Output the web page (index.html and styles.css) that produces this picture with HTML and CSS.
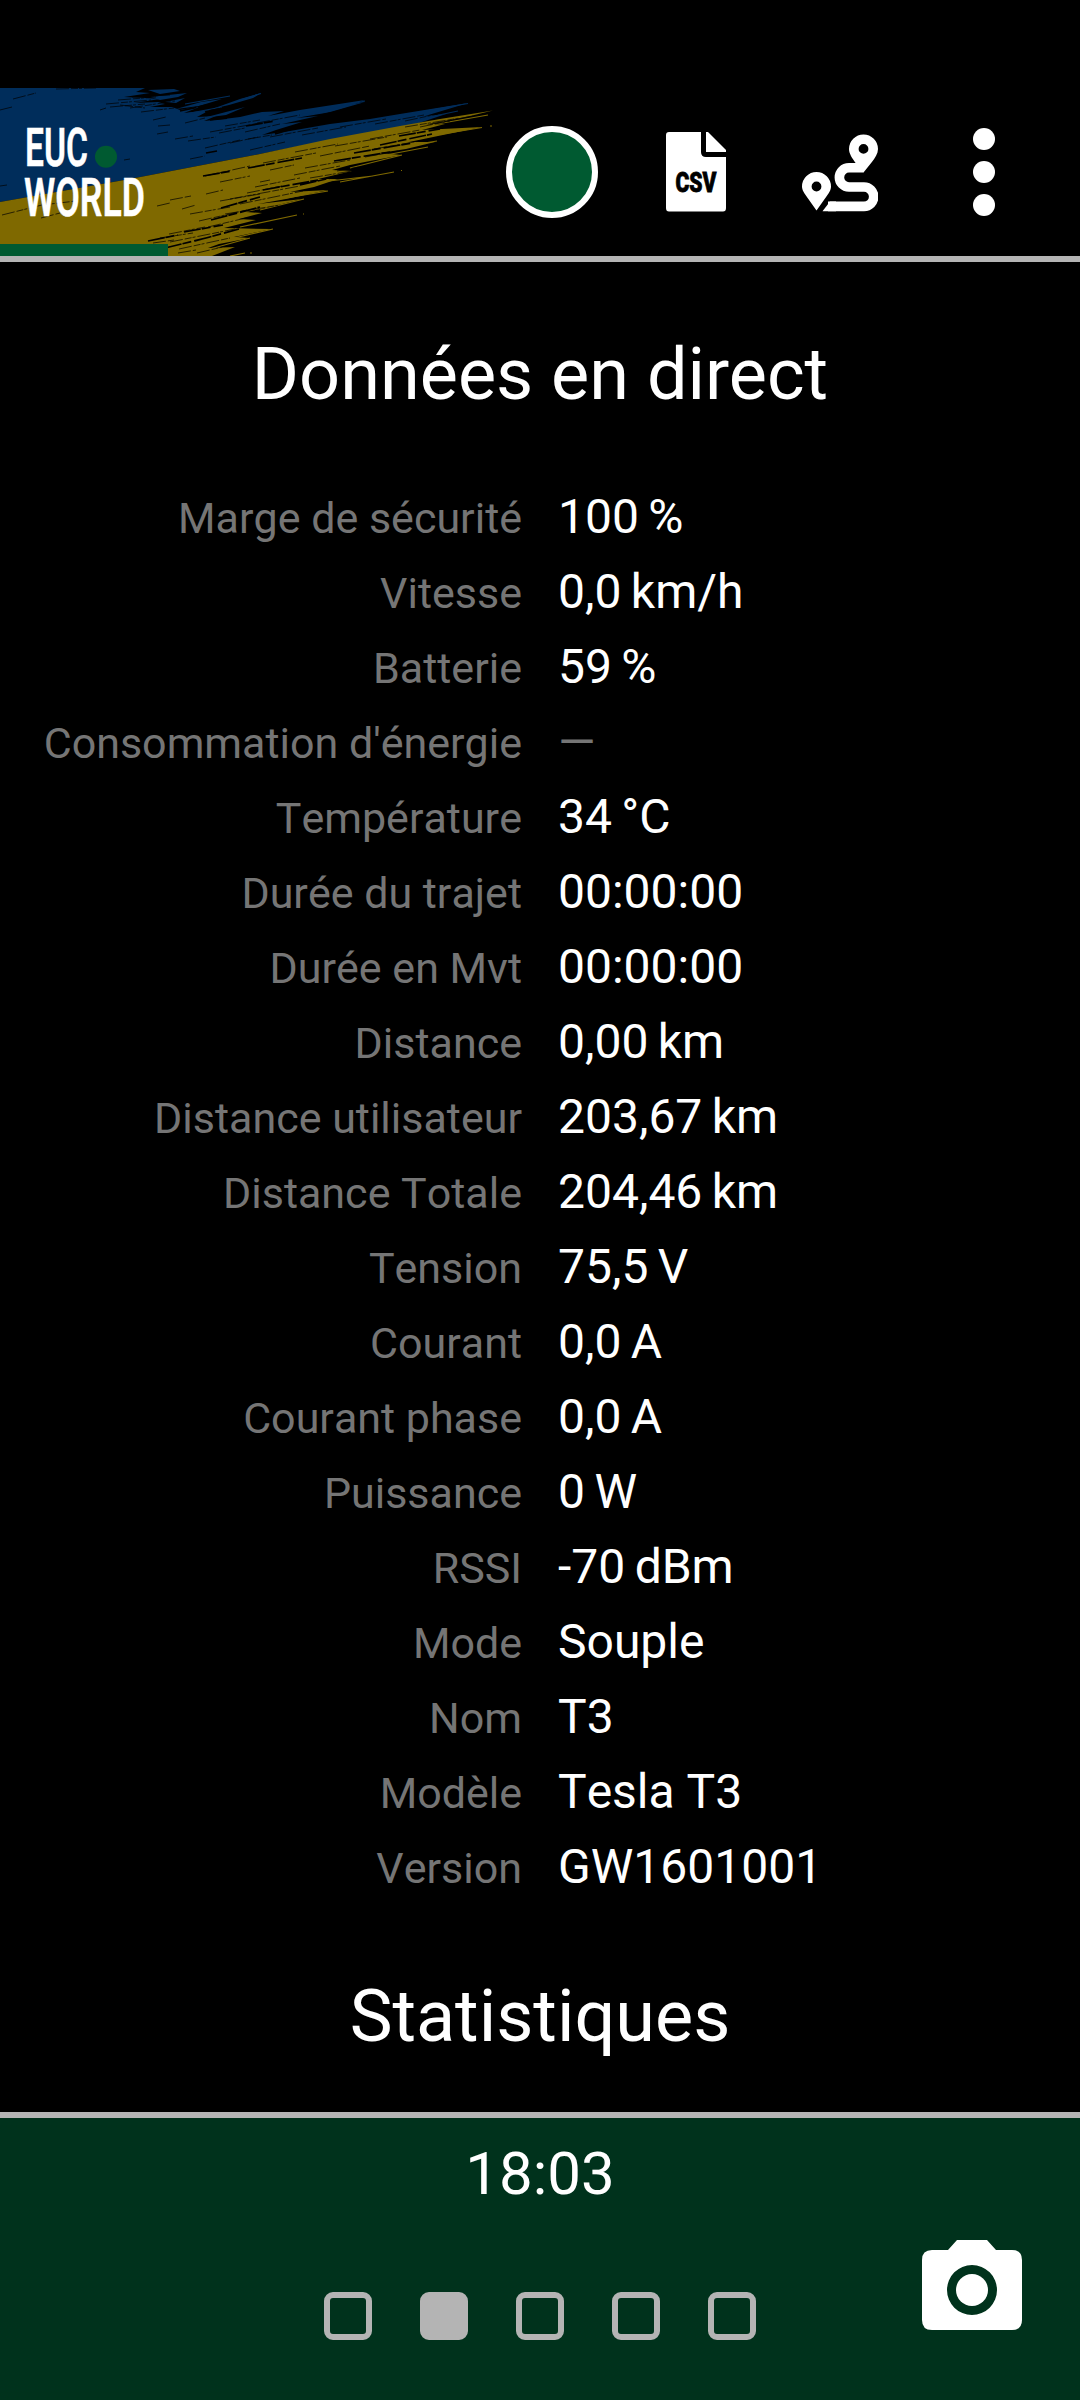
FILE: index.html
```html
<!DOCTYPE html>
<html lang="fr">
<head>
  <meta charset="UTF-8" />
  <meta name="viewport" content="width=device-width, initial-scale=1.0"/>
  <title>EUC World</title>
  <link rel="stylesheet" href="styles.css">
</head>
<body>

  <header>
    <div class="brand">
      <svg class="flag" width="510" height="168" viewBox="0 0 510 168">
        <!-- blue half -->
        <g class="blue">
          <path d="M0 0H145L136 4L150 5L124 9L146 10L160 11L134 15L158 14L165 16L150 19L172 19L180 22L202 18L184 25L210 22L197 29L216 28L204 33L224 31L240 29L262 24L284 23L268 28L300 22L365 12L346 19L325 25L296 30L318 28L282 36L302 34L276 42L262 47L290 43L330 36L370 31L400 26L468 15L445 22L425 28L446 26L416 36L384 43L330 52L260 66L130 91L0 114Z"/>
          <path d="M148 2L174 1L180 3L160 6ZM150 9L187 5L178 9L160 12ZM165 14L185 10L176 15ZM212 21L240 11L261 5L253 10L229 17ZM176 21L201 14L222 11L199 18ZM203 30L245 19L226 27ZM280 31L330 20L365 14L330 24Z"/>
        </g>
        <!-- yellow half -->
        <g class="yellow">
          <path d="M0 114L130 91L260 66L330 51L400 38L440 31L493 22.500L470 28L446 33L426 37L445 36L422 42L482 39L438 48L409 54L435 54L406 61L380 65L402 67L370 73L350 77L332 82L352 83L318 91L338 91L314 99L290 104L328 102L286 111L258 116L302 111L270 119L246 124L262 125L239 131L256 132L224 140L272 141L234 149L250 150L219 156L208 160L235 159L212 168H0Z"/>
        </g>
        <g class="yellow-line">
          <path d="M400 53L482 39.500M392 44L488 27M370 70L428 59M340 94L394 84M320 94L373 88M280 111L328 103M260 122L304 111M240 139L297 127M230 151L273 141M210 161L250 150M230 168L245 165M401 82.500L402 82.500M303 126L304 126M490 38L492 38M250 165L252 165M350 80L402 67M380 62L437 53"/>
        </g>
        <g class="blue-line">
          <path d="M380 31L468 15.500M310 26L365 13M240 12L261 5.500M185 16L230 8M420 31L458 23M180 27L222 19"/>
        </g>
        <!-- dry brush gaps -->
        <g class="gap">
          <path d="M118 12L156 9M132 9L170 7M106 16L151 12M110 19L145 16M130 20L175 13M141 24L174 20M100 22L106 20M120 17L145 20M153 32L166 29M185 35L205 30M157 46L168 44M158 38L170 37M175 51L193 48M205 60L240 52M188 53L216 49M219 45L245 40M230 55L258 49M225 38L260 32M245 44L280 36M248 51L272 47M250 62L285 54M257 35L300 27M289 41L336 31M270 49L318 40M302 47L346 39M340 39L386 31M375 36L424 27M405 33L438 26M13 11L36 5M0 22L12 19M56 1L96 0M124 72L130 71M0 98L7 97M190 71L205 68M210 44L260 35"/>
          <path class="thick" d="M206 65L217 63M246 38L275 33M210 32L228 30M180 23L225 13M205 24L240 16M275 46L306 37M248 80L302 70M203 88L232 83M148 153L178 147M165 160L210 149M184 144L223 137M195 153L239 141M211 132L260 119M221 120L260 109M263 102L318 92M300 97L348 86M334 73L390 64M354 65L412 55M380 57L432 46M399 48L440 41"/>
          <path d="M2 127L42 117L76 113M41 130L60 125M157 118L170 115M182 121L196 117M170 112L191 108M206 106L223 102M220 94L250 88M205 88L250 78M263 75L316 65M295 64L338 56M320 68L370 58M335 58L387 49M370 51L420 42M405 39L460 30M255 99L300 90M247 105L282 98M294 87L340 78M305 80L350 72M310 90L370 80M190 126L230 119M199 133L247 122M220 113L260 106M230 111L300 98M240 116L303 103M208 139L250 129M225 126L280 117M169 146L205 139M160 150L193 145M153 155L174 152M170 154L235 141M179 161L230 150M197 165L240 155M178 165L196 162M270 82L294 77M260 94L270 92M337 83L370 77M365 69L398 63M374 61L420 53M420 39L450 33M430 36L473 28"/>
        </g>
        <circle class="dot" cx="106" cy="68.700" r="11"/>
        <text class="logo-text" x="25" y="78" textLength="63" lengthAdjust="spacingAndGlyphs">EUC</text>
        <text class="logo-text" x="24" y="128" textLength="121" lengthAdjust="spacingAndGlyphs">WORLD</text>
        <rect class="charge" x="0" y="156" width="168" height="12"/>
      </svg>
    </div>

    <div class="action"><span class="record"></span></div>

    <div class="action">
      <svg width="60" height="80" viewBox="0 0 60 80">
        <path d="M3 0H35V20Q35 25 40 25H60V76Q60 79.500 57 79.500H3Q0 79.500 0 76V3Q0 0 3 0Z"/>
        <path d="M40 0H42L60 18V20H40Z"/>
        <text class="csv-text" x="9.500" y="59.500" textLength="41" lengthAdjust="spacingAndGlyphs">CSV</text>
      </svg>
    </div>

    <div class="action">
      <svg width="76" height="80" viewBox="0 0 76 80">
        <path fill-rule="evenodd" d="M61.500 40.500L54 31.500C50 26 47 21.500 47 17A14.500 14.500 0 0 1 76 17C76 21.500 73 26 69.500 30.500ZM61.500 12A4.900 4.900 0 1 0 61.500 21.800A4.900 4.900 0 1 0 61.500 12Z"/>
        <path fill-rule="evenodd" d="M14.500 78.500L6 66.500C2 61 0 58 0 54.500A14.500 14.500 0 0 1 29 54.500C29 58 27 61 23 66.500ZM14.500 49.600A4.900 4.900 0 1 0 14.500 59.400A4.900 4.900 0 1 0 14.500 49.600Z"/>
        <path class="road" d="M61.500 35.800H47A9.600 9.600 0 0 0 47 55H62A9.700 9.700 0 0 1 62 74.400H26"/>
        <path d="M20.500 79.200L28 69.600H34V79.200Z"/>
      </svg>
    </div>

    <div class="action menu"><span></span><span></span><span></span></div>
  </header>

  <main>
    <h1>Données en direct</h1>
    <dl>
      <dt>Marge de sécurité</dt><dd>100 %</dd>
      <dt>Vitesse</dt><dd>0,0 km/h</dd>
      <dt>Batterie</dt><dd>59 %</dd>
      <dt>Consommation d'énergie</dt><dd class="empty">—</dd>
      <dt>Température</dt><dd>34 °C</dd>
      <dt>Durée du trajet</dt><dd>00:00:00</dd>
      <dt>Durée en Mvt</dt><dd>00:00:00</dd>
      <dt>Distance</dt><dd>0,00 km</dd>
      <dt>Distance utilisateur</dt><dd>203,67 km</dd>
      <dt>Distance Totale</dt><dd>204,46 km</dd>
      <dt>Tension</dt><dd>75,5 V</dd>
      <dt>Courant</dt><dd>0,0 A</dd>
      <dt>Courant phase</dt><dd>0,0 A</dd>
      <dt>Puissance</dt><dd>0 W</dd>
      <dt>RSSI</dt><dd>-70 dBm</dd>
      <dt>Mode</dt><dd>Souple</dd>
      <dt>Nom</dt><dd>T3</dd>
      <dt>Modèle</dt><dd class="name">Tesla T3</dd>
      <dt>Version</dt><dd>GW1601001</dd>
    </dl>
    <h1>Statistiques</h1>
  </main>

  <footer>
    <div class="clock">18:03</div>
    <div class="pages">
      <span></span>
      <span class="active"></span>
      <span></span>
      <span></span>
      <span></span>
    </div>
    <svg class="camera" width="100" height="90" viewBox="0 0 100 90">
      <path fill-rule="evenodd" d="M35 0H65L74 10H90Q100 10 100 20V80Q100 90 90 90H10Q0 90 0 80V20Q0 10 10 10H26ZM50 25A25 25 0 1 0 50 75A25 25 0 1 0 50 25Z"/>
      <circle cx="50" cy="50" r="16"/>
    </svg>
  </footer>

</body>
</html>
```
FILE: styles.css
```css
* {
  box-sizing: border-box;
}
body {
  margin: 0;
  height: 2400px;
  display: flex;
  flex-direction: column;
  overflow: hidden;
  background-color: #000;
  color: #fff;
  font-family: Roboto, sans-serif;
}
svg {
  display: block;
  fill: #fff;
}
header {
  display: flex;
  height: 262px;
  padding-top: 88px;
  border-bottom: 6px solid #b4b4b4;
}
.brand {
  width: 480px;
}
.flag {
  overflow: hidden;
}
.blue {
  fill: #002d5b;
}
.yellow {
  fill: #7f6900;
}
.yellow-line, .blue-line, .gap {
  fill: none;
  stroke-width: 1.2;
}
.yellow-line {
  stroke: #7f6900;
}
.blue-line {
  stroke: #002d5b;
}
.gap {
  stroke: #000;
  stroke-width: 0.7;
  stroke-dasharray: 13 2 7 1 3 2;
}
.thick {
  stroke-width: 1.7;
  stroke-dasharray: 17 1 9 3;
}
.dot, .charge {
  fill: #005a31;
}
.logo-text {
  font-size: 54px;
  font-weight: 600;
  stroke: #fff;
  stroke-width: 0.4;
}
.action {
  width: 144px;
  display: flex;
  align-items: center;
  justify-content: center;
}
.record {
  width: 92px;
  height: 92px;
  border: 6px solid #fff;
  border-radius: 50%;
  background-color: #005a31;
}
.csv-text {
  fill: #000;
  stroke: #000;
  stroke-width: 0.8;
  font-size: 28px;
  font-weight: 900;
}
.road {
  fill: none;
  stroke: #fff;
  stroke-width: 9.6;
}
.menu {
  flex-direction: column;
  gap: 11px;
}
.menu span {
  width: 22px;
  height: 22px;
  border-radius: 50%;
  background-color: #fff;
}
main {
  flex: 1;
  overflow: hidden;
  padding-top: 65px;
}
h1 {
  margin: 0;
  font-size: 72px;
  font-weight: 400;
  line-height: 96px;
  text-align: center;
}
dl {
  display: grid;
  grid-template-columns: 522px 1fr;
  column-gap: 36px;
  grid-auto-rows: 75px;
  align-items: baseline;
  margin: 56px 0 65px;
  line-height: 75px;
  font-kerning: none;
}
dt {
  color: #757575;
  font-size: 43px;
  text-align: right;
}
dd {
  margin: 0;
  font-size: 48px;
  word-spacing: -2.5px;
}
.name {
  word-spacing: 0;
}
.empty {
  color: #757575;
}
footer {
  position: relative;
  height: 288px;
  border-top: 6px solid #b4b4b4;
  background-color: #00321c;
}
.clock {
  padding-top: 20px;
  font-size: 60px;
  line-height: 72px;
  text-align: center;
}
.pages {
  display: flex;
  justify-content: center;
  gap: 48px;
  margin-top: 82px;
}
.pages span {
  width: 48px;
  height: 48px;
  border: 6px solid #b4b4b4;
  border-radius: 9px;
}
.pages .active {
  background-color: #b4b4b4;
}
/* floats over the footer */
.camera {
  position: absolute;
  right: 58px;
  top: 122px;
}
```
